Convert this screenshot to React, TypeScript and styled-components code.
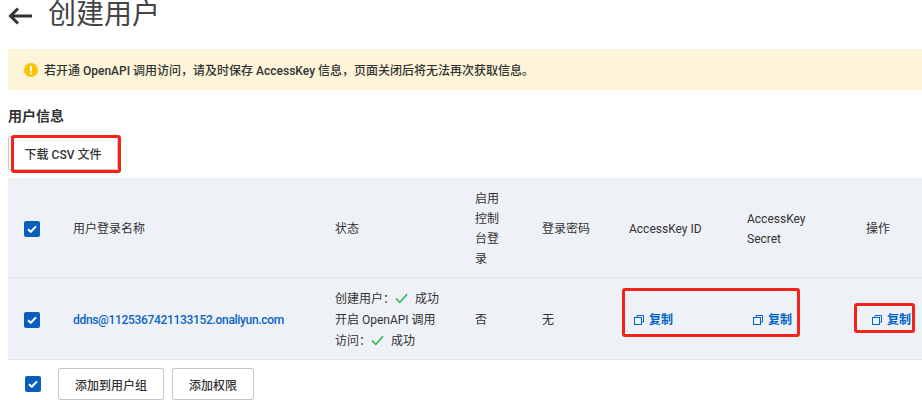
import React from 'react';
import styled, { createGlobalStyle } from 'styled-components';

const GlobalStyle = createGlobalStyle`
  html, body {
    margin: 0;
    background: #fff;
  }
  body {
    font-family: Roboto, "Noto Sans CJK SC", sans-serif;
    color: #333;
  }
`;

const Page = styled.div`
  width: 922px;
  height: 400px;
  overflow: hidden;
  padding-left: 8px;
  box-sizing: border-box;
`;

const TitleRow = styled.div`
  display: flex;
  align-items: center;
  gap: 15px;
  height: 28px;
  margin-bottom: 21px;
`;

const Title = styled.h1`
  margin: 0;
  padding-top: 1px;
  font-size: 28px;
  line-height: 28px;
  font-weight: 400;
  color: #444;
`;

const ArrowSvg = styled.svg`
  margin-top: 3px;
`;

const Alert = styled.div`
  display: flex;
  align-items: center;
  gap: 6px;
  height: 41px;
  padding-left: 16px;
  background: #fdf4da;
  font-size: 12px;
  font-weight: 500;
  color: #333;
`;

const SectionTitle = styled.h2`
  margin: 17px 0 0;
  font-size: 14px;
  line-height: 18px;
  font-weight: 600;
  color: #333;
`;

const DownloadWrap = styled.div`
  position: relative;
  width: 110px;
  height: 34px;
  margin: 11px 0 8px;
`;

const Button = styled.button<{ $w: number }>`
  width: ${(p) => p.$w}px;
  height: 32px;
  padding: 0;
  box-sizing: border-box;
  border: 1px solid #c1c6cf;
  border-radius: 2px;
  background: #fff;
  font-family: inherit;
  font-size: 12px;
  font-weight: 500;
  color: #333;
`;

const DownloadButton = styled(Button)`
  height: 34px;
`;

const RedBox = styled.div<{ $l: number; $t: number; $w: number; $h: number }>`
  position: absolute;
  left: ${(p) => p.$l}px;
  top: ${(p) => p.$t}px;
  width: ${(p) => p.$w}px;
  height: ${(p) => p.$h}px;
  box-sizing: border-box;
  border: 3px solid #f5221c;
  border-radius: 3px;
`;

const Table = styled.div`
  position: relative;
  display: grid;
  grid-template-columns: 49px 262px 140px 67px 87px 118px 119px 72px;
  grid-template-rows: 100px 81px;
  background: #eef1f6;
  font-size: 12px;
  line-height: 20px;
  color: #333;
  border-bottom: 1px solid #dfe2e7;
`;

const Cell = styled.div<{ $head?: boolean }>`
  display: flex;
  align-items: center;
  min-width: 0;
  padding: ${(p) => (p.$head ? '2px' : '3px')} 0 0 16px;
  box-sizing: border-box;
  border-bottom: ${(p) => (p.$head ? '1px solid #dfe2e7' : 'none')};
`;

const NarrowText = styled.div`
  width: 30px;
`;

const WrapText = styled.div`
  width: 70px;
`;

const StatusText = styled.div`
  width: 108px;
  line-height: 21px;
`;

const UserLink = styled.a`
  font-weight: 500;
  letter-spacing: -0.32px;
  color: #0a64c4;
  white-space: nowrap;
`;

const CopyLink = styled.a<{ $ml: number }>`
  display: inline-flex;
  align-items: center;
  gap: 5px;
  margin-left: ${(p) => p.$ml}px;
  font-weight: 700;
  color: #0064c8;
  white-space: nowrap;
`;

const CheckBox = styled.span`
  display: flex;
  align-items: center;
  justify-content: center;
  flex: none;
  width: 16px;
  height: 16px;
  border-radius: 2px;
  background: #0a5fbd;
`;

const GreenSvg = styled.svg`
  margin: 0 7px 0 0;
  vertical-align: -1px;
`;

const Footer = styled.div`
  display: flex;
  align-items: center;
  gap: 8px;
  margin-top: 8px;
  padding-left: 17px;
`;

const FooterCheck = styled(CheckBox)`
  margin-right: 9px;
`;

const TickMark = () => (
  <svg width="10" height="8" viewBox="0 0 10 8" fill="none">
    <path d="M1 4.2 3.8 6.8 9 1.4" stroke="#fff" strokeWidth="2" />
  </svg>
);

const Tick = () => (
  <CheckBox>
    <TickMark />
  </CheckBox>
);

const GreenCheck = () => (
  <GreenSvg width="13" height="11" viewBox="0 0 13 11" fill="none">
    <path d="M1 5.5 4.8 9.5 12 1.2" stroke="#22b84a" strokeWidth="1.5" />
  </GreenSvg>
);

const CopyIcon = () => (
  <svg width="10" height="10" viewBox="0 0 10 10" fill="none">
    <rect x="0.5" y="2.5" width="7" height="7" stroke="#0064c8" />
    <path d="M3 2.5V.5H9.5V7H7.5" stroke="#0064c8" />
  </svg>
);

const BackArrow = () => (
  <ArrowSvg width="25" height="18" viewBox="0 0 25 18" fill="none">
    <path d="M24 9H2M10 1.5 2.5 9l7.5 7.5" stroke="#333" strokeWidth="3" />
  </ArrowSvg>
);

const WarnIcon = () => (
  <svg width="14" height="14" viewBox="0 0 14 14">
    <circle cx="7" cy="7" r="7" fill="#ffc200" />
    <rect x="6" y="2.8" width="2" height="5.6" rx="0.6" fill="#fff" />
    <rect x="6" y="9.4" width="2" height="2" rx="0.6" fill="#fff" />
  </svg>
);

const Copy = ({ ml }: { ml: number }) => (
  <CopyLink $ml={ml}>
    <CopyIcon />
    复制
  </CopyLink>
);

export default function App() {
  return (
    <Page>
      <GlobalStyle />
      <TitleRow>
        <BackArrow />
        <Title>创建用户</Title>
      </TitleRow>
      <Alert>
        <WarnIcon />
        若开通 OpenAPI 调用访问，请及时保存 AccessKey 信息，页面关闭后将无法再次获取信息。
      </Alert>
      <SectionTitle>用户信息</SectionTitle>
      <DownloadWrap>
        <DownloadButton $w={110}>下载 CSV 文件</DownloadButton>
        <RedBox $l={3} $t={-1} $w={110} $h={38} />
      </DownloadWrap>
      <Table>
        <Cell $head>
          <Tick />
        </Cell>
        <Cell $head>用户登录名称</Cell>
        <Cell $head>状态</Cell>
        <Cell $head>
          <NarrowText>启用控制台登录</NarrowText>
        </Cell>
        <Cell $head>登录密码</Cell>
        <Cell $head>AccessKey ID</Cell>
        <Cell $head>
          <WrapText>AccessKey Secret</WrapText>
        </Cell>
        <Cell $head>操作</Cell>

        <Cell>
          <Tick />
        </Cell>
        <Cell>
          <UserLink>ddns@1125367421133152.onaliyun.com</UserLink>
        </Cell>
        <Cell>
          <StatusText>
            创建用户：
            <GreenCheck />
            成功
            <br />
            开启 OpenAPI 调用访问：
            <GreenCheck />
            成功
          </StatusText>
        </Cell>
        <Cell>否</Cell>
        <Cell>无</Cell>
        <Cell>
          <Copy ml={5} />
        </Cell>
        <Cell>
          <Copy ml={6} />
        </Cell>
        <Cell>
          <Copy ml={6} />
        </Cell>
        <RedBox $l={614} $t={110} $w={178} $h={49} />
        <RedBox $l={846} $t={125} $w={61} $h={30} />
      </Table>
      <Footer>
        <FooterCheck>
          <TickMark />
        </FooterCheck>
        <Button $w={106}>添加到用户组</Button>
        <Button $w={82}>添加权限</Button>
      </Footer>
    </Page>
  );
}
